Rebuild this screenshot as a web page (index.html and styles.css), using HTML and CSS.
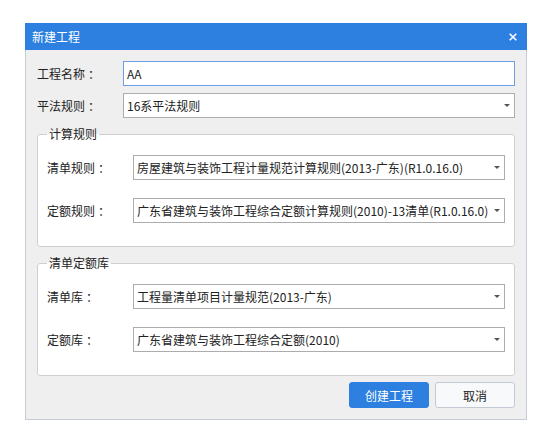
FILE: index.html
```html
<!DOCTYPE html>
<html lang="zh-CN">
<head>
<meta charset="utf-8">
<title>新建工程</title>
<link rel="stylesheet" href="styles.css">
</head>
<body>
<div class="dialog">
  <div class="titlebar">
    <span class="title">新建工程</span>
    <svg class="close" width="8" height="8" viewBox="0 0 8 8"><path d="M0.7 0.7L7.3 7.3M7.3 0.7L0.7 7.3" stroke="#fff" stroke-width="1.6" fill="none"/></svg>
  </div>
  <div class="body">
    <div class="row">
      <label class="label">工程名称<span class="colon">：</span></label>
      <input class="control input" type="text" value="AA">
    </div>
    <div class="row">
      <label class="label">平法规则<span class="colon">：</span></label>
      <div class="control select"><span class="value">16系平法规则</span><i class="caret"></i></div>
    </div>
    <fieldset class="group">
      <legend>计算规则</legend>
      <div class="row">
        <label class="label">清单规则<span class="colon">：</span></label>
        <div class="control select"><span class="value">房屋建筑与装饰工程计量规范计算规则(2013-广东)(R1.0.16.0)</span><i class="caret"></i></div>
      </div>
      <div class="row gap">
        <label class="label">定额规则<span class="colon">：</span></label>
        <div class="control select"><span class="value">广东省建筑与装饰工程综合定额计算规则(2010)-13清单(R1.0.16.0)</span><i class="caret"></i></div>
      </div>
    </fieldset>
    <fieldset class="group">
      <legend>清单定额库</legend>
      <div class="row">
        <label class="label">清单库<span class="colon">：</span></label>
        <div class="control select"><span class="value">工程量清单项目计量规范(2013-广东)</span><i class="caret"></i></div>
      </div>
      <div class="row gap">
        <label class="label">定额库<span class="colon">：</span></label>
        <div class="control select"><span class="value">广东省建筑与装饰工程综合定额(2010)</span><i class="caret"></i></div>
      </div>
    </fieldset>
    <div class="actions">
      <button class="btn primary">创建工程</button>
      <button class="btn">取消</button>
    </div>
  </div>
</div>
</body>
</html>
```
FILE: styles.css
```css
html, body {
  margin: 0;
  padding: 0;
  background: #fff;
}
body {
  font-family: "Noto Sans CJK SC", sans-serif;
  font-size: 12px;
  color: #222;
}
.dialog {
  margin: 23px 0 0 25px;
  width: 502px;
}
.titlebar {
  height: 27px;
  background: #2d80e0;
  color: #fff;
  display: flex;
  align-items: center;
  justify-content: space-between;
  padding: 0 10px 0 7px;
  font-size: 12px;
}
.close {
  display: block;
}
.body {
  border: 1px solid #c5ccd8;
  border-top: 0;
  background: #efefef;
  padding: 11px 11px 11px;
}
.row {
  display: flex;
  align-items: center;
}
.row + .row {
  margin-top: 7px;
}
.row.gap {
  margin-top: 18px;
}
.label {
  width: 86px;
  flex: none;
  line-height: 16px;
}
.colon {
  margin-left: 3px;
}
.control {
  flex: 1;
  min-width: 0;
  height: 25px;
  box-sizing: border-box;
  background: #fff;
  border: 1px solid #acacac;
  padding: 0 4px 0 3px;
  font: inherit;
  color: #222;
  margin: 0;
}
.input {
  border-color: #6f9ee6;
  outline: none;
}
.select {
  display: flex;
  align-items: center;
  justify-content: space-between;
}
.value {
  white-space: nowrap;
  overflow: hidden;
}
.caret {
  flex: none;
  width: 0;
  height: 0;
  border-left: 3px solid transparent;
  border-right: 3px solid transparent;
  border-top: 3px solid #555;
  margin-left: 3px;
}
.group {
  margin: 8px 0 0;
  padding: 13px 9px 23px;
  border: 1px solid #cfcfcf;
  border-radius: 3px;
  background: #fff;
  min-width: 0;
}
.group legend {
  padding: 0 2px;
  line-height: 16px;
  font-size: 12px;
}
.actions {
  display: flex;
  justify-content: flex-end;
  gap: 6px;
  margin-top: 6px;
}
.btn {
  width: 80px;
  height: 26px;
  box-sizing: border-box;
  border: 1px solid #c3c9d3;
  border-radius: 3px;
  background: #f8f9fa;
  font: inherit;
  color: #222;
  padding: 0;
}
.btn.primary {
  background: #2d80e0;
  border-color: #2d80e0;
  color: #fff;
}
```
